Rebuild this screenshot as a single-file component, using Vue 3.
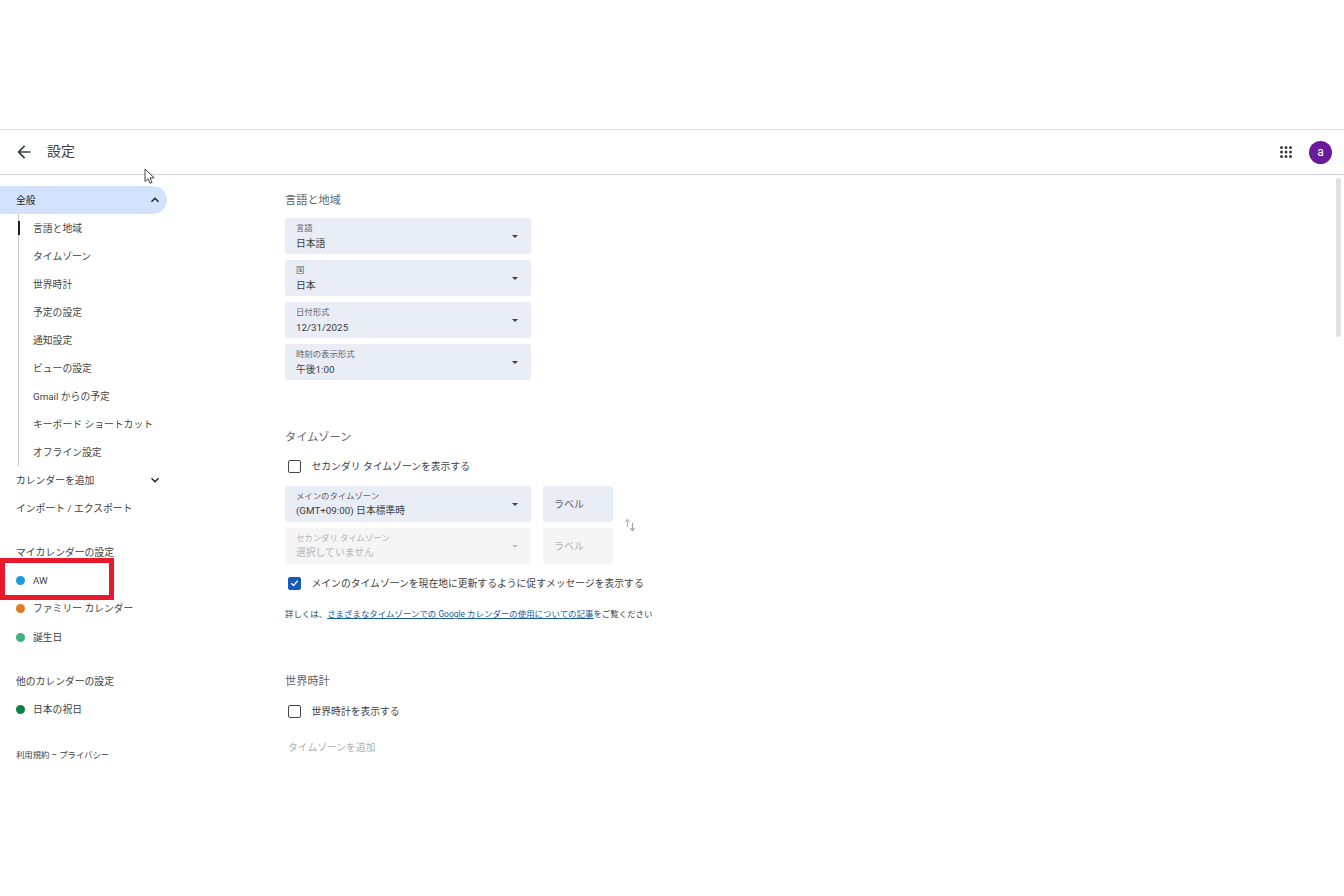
<script setup>
const subs = ['言語と地域','タイムゾーン','世界時計','予定の設定','通知設定','ビューの設定','Gmail からの予定','キーボード ショートカット','オフライン設定']
const selects = [
  ['言語','日本語'],['国','日本'],['日付形式','12/31/2025'],['時刻の表示形式','午後1:00']
]
</script>

<template>
  <div class="page">
    <header class="bar">
      <svg class="back" viewBox="0 0 24 24"><path d="M20 11H7.83l5.59-5.59L12 4l-8 8 8 8 1.41-1.41L7.83 13H20v-2z" fill="#3c4043"/></svg>
      <h1 class="title">設定</h1>
      <div class="spacer"></div>
      <svg class="apps" viewBox="0 0 24 24"><path fill="#3c4043" d="M6 8a2 2 0 1 0 0-4 2 2 0 0 0 0 4zm6 0a2 2 0 1 0 0-4 2 2 0 0 0 0 4zm6 0a2 2 0 1 0 0-4 2 2 0 0 0 0 4zM6 14a2 2 0 1 0 0-4 2 2 0 0 0 0 4zm6 0a2 2 0 1 0 0-4 2 2 0 0 0 0 4zm6 0a2 2 0 1 0 0-4 2 2 0 0 0 0 4zM6 20a2 2 0 1 0 0-4 2 2 0 0 0 0 4zm6 0a2 2 0 1 0 0-4 2 2 0 0 0 0 4zm6 0a2 2 0 1 0 0-4 2 2 0 0 0 0 4z"/></svg>
      <div class="avatar">a</div>
    </header>

    <div class="body">
      <nav class="side">
        <div class="row pill">
          <span>全般</span>
          <svg class="chev" viewBox="0 0 24 24" width="16" height="16"><path d="M12 8l-6 6 1.41 1.41L12 10.83l4.59 4.58L18 14z" fill="#1f1f1f"/></svg>
        </div>
        <ul class="subs">
          <li v-for="(s,i) in subs" :key="s" class="sub" :class="{active:i===0}">{{ s }}</li>
        </ul>
        <div class="row">
          <span>カレンダーを追加</span>
          <svg class="chev" viewBox="0 0 24 24" width="16" height="16"><path d="M16.59 8.59L12 13.17 7.41 8.59 6 10l6 6 6-6z" fill="#1f1f1f"/></svg>
        </div>
        <div class="row">インポート / エクスポート</div>

        <div class="row group first">マイカレンダーの設定</div>
        <div class="cal"><i class="dot blue"></i>AW</div>
        <div class="cal"><i class="dot orange"></i>ファミリー カレンダー</div>
        <div class="cal third"><i class="dot green"></i>誕生日</div>

        <div class="row group second">他のカレンダーの設定</div>
        <div class="cal"><i class="dot dark"></i>日本の祝日</div>

        <div class="terms">利用規約 – プライバシー</div>
      </nav>

      <main class="main">
        <h2 class="head">言語と地域</h2>
        <div class="stack">
          <div v-for="s in selects" :key="s[0]" class="select">
            <div class="texts"><span class="lab">{{ s[0] }}</span><span class="val">{{ s[1] }}</span></div>
            <i class="caret"></i>
          </div>
        </div>

        <h2 class="head tz">タイムゾーン</h2>
        <label class="check first-check"><i class="box"></i>セカンダリ タイムゾーンを表示する</label>

        <div class="tzgrid">
          <div class="tzcol">
            <div class="tzrow">
              <div class="select">
                <div class="texts"><span class="lab">メインのタイムゾーン</span><span class="val">(GMT+09:00) 日本標準時</span></div>
                <i class="caret"></i>
              </div>
              <div class="labelbox">ラベル</div>
            </div>
            <div class="tzrow off">
              <div class="select">
                <div class="texts"><span class="lab">セカンダリ タイムゾーン</span><span class="val">選択していません</span></div>
                <i class="caret"></i>
              </div>
              <div class="labelbox">ラベル</div>
            </div>
          </div>
          <svg class="swap" viewBox="0 0 12 14" width="12" height="14"><path d="M3.5 9V1.5M1.2 3.8l2.3-2.3 2.3 2.3" fill="none" stroke="#b0b4b8" stroke-width="1.1"/><path d="M8.5 5v7.5M6.2 10.2l2.3 2.3 2.3-2.3" fill="none" stroke="#9aa0a6" stroke-width="1.1"/></svg>
        </div>

        <label class="check second-check">
          <i class="box on"><svg viewBox="0 0 14 14" width="14" height="14"><path d="M2.8 7.2l3 3 5.4-6" fill="none" stroke="#fff" stroke-width="1.7"/></svg></i>
          メインのタイムゾーンを現在地に更新するように促すメッセージを表示する
        </label>
        <p class="more">詳しくは、<a class="link">さまざまなタイムゾーンでの Google カレンダーの使用についての記事</a>をご覧ください</p>

        <h2 class="head clock">世界時計</h2>
        <label class="check clock-check"><i class="box"></i>世界時計を表示する</label>
        <div class="add">タイムゾーンを追加</div>
      </main>

      <div class="thumb"></div>
    </div>

    <div class="highlight"></div>
    <svg class="cursor" viewBox="0 0 12 18" width="12" height="18"><path d="M1 1v12.5l3-2.8 2 4.6 2-.9-2-4.5h4.2z" fill="#fff" stroke="#444" stroke-width="1"/></svg>
  </div>
</template>

<style scoped>
.page {
  position: relative;
  width: 1344px;
  height: 896px;
  overflow: hidden;
  padding-top: 129px;
  box-sizing: border-box;
  background: #fff;
  font-family: Roboto, "Noto Sans CJK JP", sans-serif;
  color: #3c4043;
}
.bar {
  box-sizing: border-box;
  height: 46px;
  display: flex;
  align-items: center;
  border-top: 1px solid #e0e0e0;
  border-bottom: 1px solid #d0d2d5;
  padding: 0 12px;
}
.back { width: 20px; height: 20px; margin-left: 2px; margin-right: 13px; flex: none; }
.title { font-size: 14px; line-height: 20px; font-weight: 400; margin: 0 0 2px; color: #3c4043; }
.spacer { flex: 1; }
.apps { width: 18px; height: 18px; margin-right: 14px; flex: none; }
.avatar {
  width: 23px; height: 23px; border-radius: 50%; background: #6a1b9a; color: #fff;
  font-size: 12px; display: flex; align-items: center; justify-content: center;
}
.body { position: relative; display: flex; }
.side { width: 167px; padding-top: 11px; font-size: 9.8px; flex: none; }
.row {
  height: 28px; display: flex; align-items: center; justify-content: space-between;
  padding: 0 4px 0 16px; color: #3c4043;
}
.pill { background: #d3e3fd; border-radius: 0 14px 14px 0; color: #1f1f1f; }
.subs { list-style: none; margin: 0 0 0 18px; padding: 0; border-left: 1px solid #c4c7c5; }
.sub { height: 28px; line-height: 30px; padding-left: 14px; white-space: nowrap; position: relative; color: #444746; }
.sub.active::before {
  content: ""; position: absolute; left: -1px; top: 7px; width: 2px; height: 14px; background: #1f1f1f;
}
.group.first { margin-top: 16px; }
.group.second { margin-top: 16px; }
.cal { height: 28px; display: flex; align-items: center; padding-left: 16px; white-space: nowrap; color: #3c4043; }
.cal.third { margin-top: 1px; }
.dot { width: 9px; height: 9px; border-radius: 50%; margin-right: 8px; flex: none; }
.blue { background: #1a9ad6; }
.orange { background: #e07b1f; }
.green { background: #3fb27f; }
.dark { background: #0b8043; }
.terms { margin: 25px 0 0 16px; font-size: 8.4px; line-height: 14px; color: #3c4043; white-space: nowrap; }

.main { margin-left: 118px; padding-top: 18px; flex: none; font-size: 9.8px; }
.head { margin: 0; font-size: 11.2px; line-height: 16px; font-weight: 400; color: #5f6368; }
.stack { display: flex; flex-direction: column; gap: 6px; margin-top: 9px; }
.stack .val { margin-top: 2px; }
.select {
  width: 246px; height: 36px; box-sizing: border-box; background: #e9edf6; border-radius: 2px;
  display: flex; align-items: center; justify-content: space-between; padding: 0 13px 0 11px;
}
.texts { display: flex; flex-direction: column; }
.lab { font-size: 8.4px; line-height: 12px; color: #5f6368; white-space: nowrap; }
.val { font-size: 9.8px; line-height: 15px; color: #3c4043; white-space: nowrap; margin-top: 1px; }
.caret { width: 0; height: 0; border-left: 3.5px solid transparent; border-right: 3.5px solid transparent; border-top: 3.5px solid #3c4043; }
.head.tz { margin-top: 50px; }
.check { display: flex; align-items: center; font-size: 9.8px; line-height: 14px; color: #3c4043; white-space: nowrap; }
.box {
  width: 11px; height: 11px; border: 1.5px solid #444746; border-radius: 2px; margin: -1px 10.5px 1px 3px;
  flex: none; display: flex; align-items: center; justify-content: center;
}
.box.on { background: #185abc; border-color: #185abc; }
.first-check { margin-top: 14px; }
.tzgrid { display: flex; align-items: center; margin-top: 12px; }
.tzcol { display: flex; flex-direction: column; gap: 6px; }
.tzrow { display: flex; gap: 12px; }
.labelbox {
  width: 70px; height: 36px; box-sizing: border-box; background: #e9edf6; border-radius: 2px;
  padding: 0 0 2px 11px; display: flex; align-items: center; font-size: 10px; color: #5f6368;
}
.off .select, .off .labelbox { background: #f5f5f5; }
.off .lab, .off .val, .off .labelbox { color: #b4b4b4; }
.off .caret { border-top-color: #c0c0c0; }
.swap { margin-left: 11px; }
.second-check { margin-top: 13px; }
.more { margin: 16px 0 0; font-size: 8.45px; line-height: 14px; color: #3c4043; white-space: nowrap; }
.link { color: #1a5a9e; text-decoration: underline; }
.head.clock { margin-top: 53px; }
.clock-check { margin-top: 15px; }
.add { margin: 22px 0 0 3px; font-size: 9.8px; line-height: 14px; color: #b0b0b0; }

.thumb { position: absolute; right: 3px; top: 3px; width: 5px; height: 159px; border-radius: 3px; background: #e0e0e0; }
.highlight { position: absolute; left: 0; top: 558px; width: 114px; height: 42px; box-sizing: border-box; border: 5px solid #e8192c; pointer-events: none; }
.cursor { position: absolute; left: 144px; top: 168px; }
</style>
